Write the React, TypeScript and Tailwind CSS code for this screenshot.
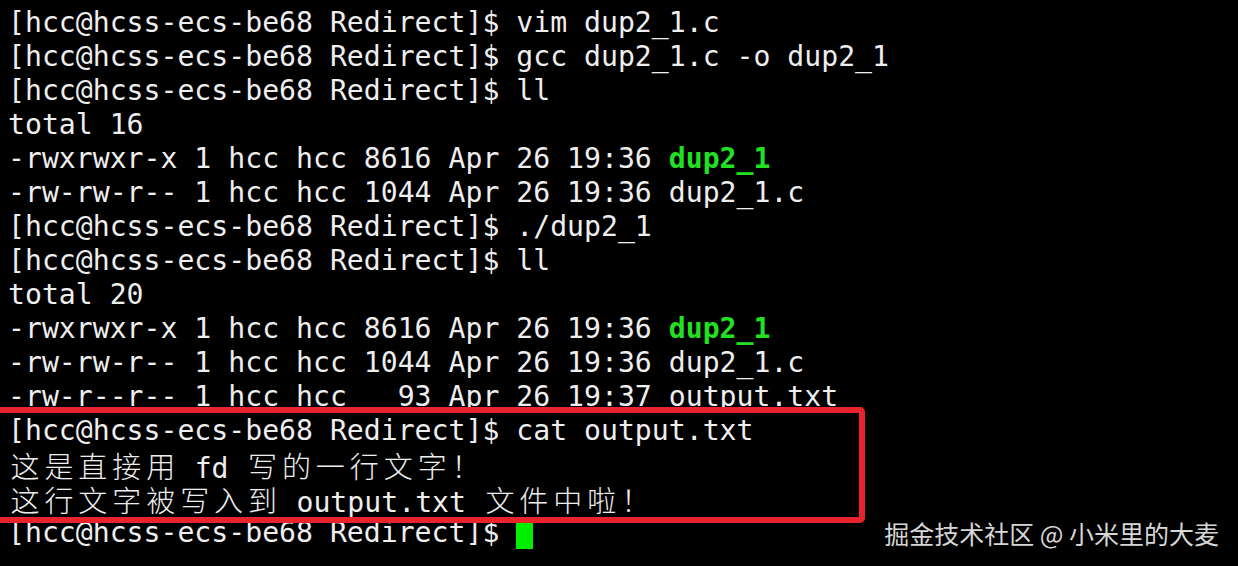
import React from 'react'

const mono = "font-['DejaVu_Sans_Mono','Liberation_Mono','Noto_Sans_CJK_SC',monospace]"
const prompt = '[hcc@hcss-ecs-be68 Redirect]$ '

// wide (CJK / full-width) chars take two terminal cells
function Cells({ text }: { text: string }) {
  const parts = Array.from(text)
  return (
    <>
      {parts.map((ch, i) =>
        /[\u3000-\u9fff\uff00-\uffef]/.test(ch) ? (
          <span
            key={i}
            className="inline-block w-[33.95px] text-center font-['Noto_Sans_CJK_SC',sans-serif] text-[29px] font-light"
          >
            {ch}
          </span>
        ) : (
          <span key={i}>{ch}</span>
        )
      )}
    </>
  )
}

function Line({ children }: { children: React.ReactNode }) {
  return <div className="h-[34px] leading-[34px] whitespace-pre">{children}</div>
}

function Exe({ name }: { name: string }) {
  return <span className="font-bold text-[#22e022]">{name}</span>
}

export default function App() {
  return (
    <div className="relative h-[566px] w-[1238px] overflow-hidden bg-black">
      <div className={`${mono} pl-[8px] pt-[6px] text-[28.15px] text-[#eeeeee]`}>
        <Line>{prompt}vim dup2_1.c</Line>
        <Line>{prompt}gcc dup2_1.c -o dup2_1</Line>
        <Line>{prompt}ll</Line>
        <Line>total 16</Line>
        <Line>-rwxrwxr-x 1 hcc hcc 8616 Apr 26 19:36 <Exe name="dup2_1" /></Line>
        <Line>-rw-rw-r-- 1 hcc hcc 1044 Apr 26 19:36 dup2_1.c</Line>
        <Line>{prompt}./dup2_1</Line>
        <Line>{prompt}ll</Line>
        <Line>total 20</Line>
        <Line>-rwxrwxr-x 1 hcc hcc 8616 Apr 26 19:36 <Exe name="dup2_1" /></Line>
        <Line>-rw-rw-r-- 1 hcc hcc 1044 Apr 26 19:36 dup2_1.c</Line>
        <Line>-rw-r--r-- 1 hcc hcc   93 Apr 26 19:37 output.txt</Line>
        <Line>{prompt}cat output.txt</Line>
        <Line><Cells text="这是直接用 fd 写的一行文字！" /></Line>
        <Line><Cells text="这行文字被写入到 output.txt 文件中啦！" /></Line>
        <div className="flex h-[34px] items-center whitespace-pre leading-[34px]">
          <span>{prompt}</span>
          <span className="h-[31px] w-[17px] bg-[#00f000]" />
        </div>
      </div>

      {/* annotation box */}
      <div className="absolute left-[-6px] top-[407px] h-[116px] w-[871px] rounded-[5px] border-[6px] border-[#e8232b]" />

      {/* watermark */}
      <div className="absolute right-[19px] top-[516px] font-['Noto_Sans_CJK_SC',sans-serif] text-[25px] leading-[34px] text-[#d6d6d6]">
        掘金技术社区 @ 小米里的大麦
      </div>
    </div>
  )
}
